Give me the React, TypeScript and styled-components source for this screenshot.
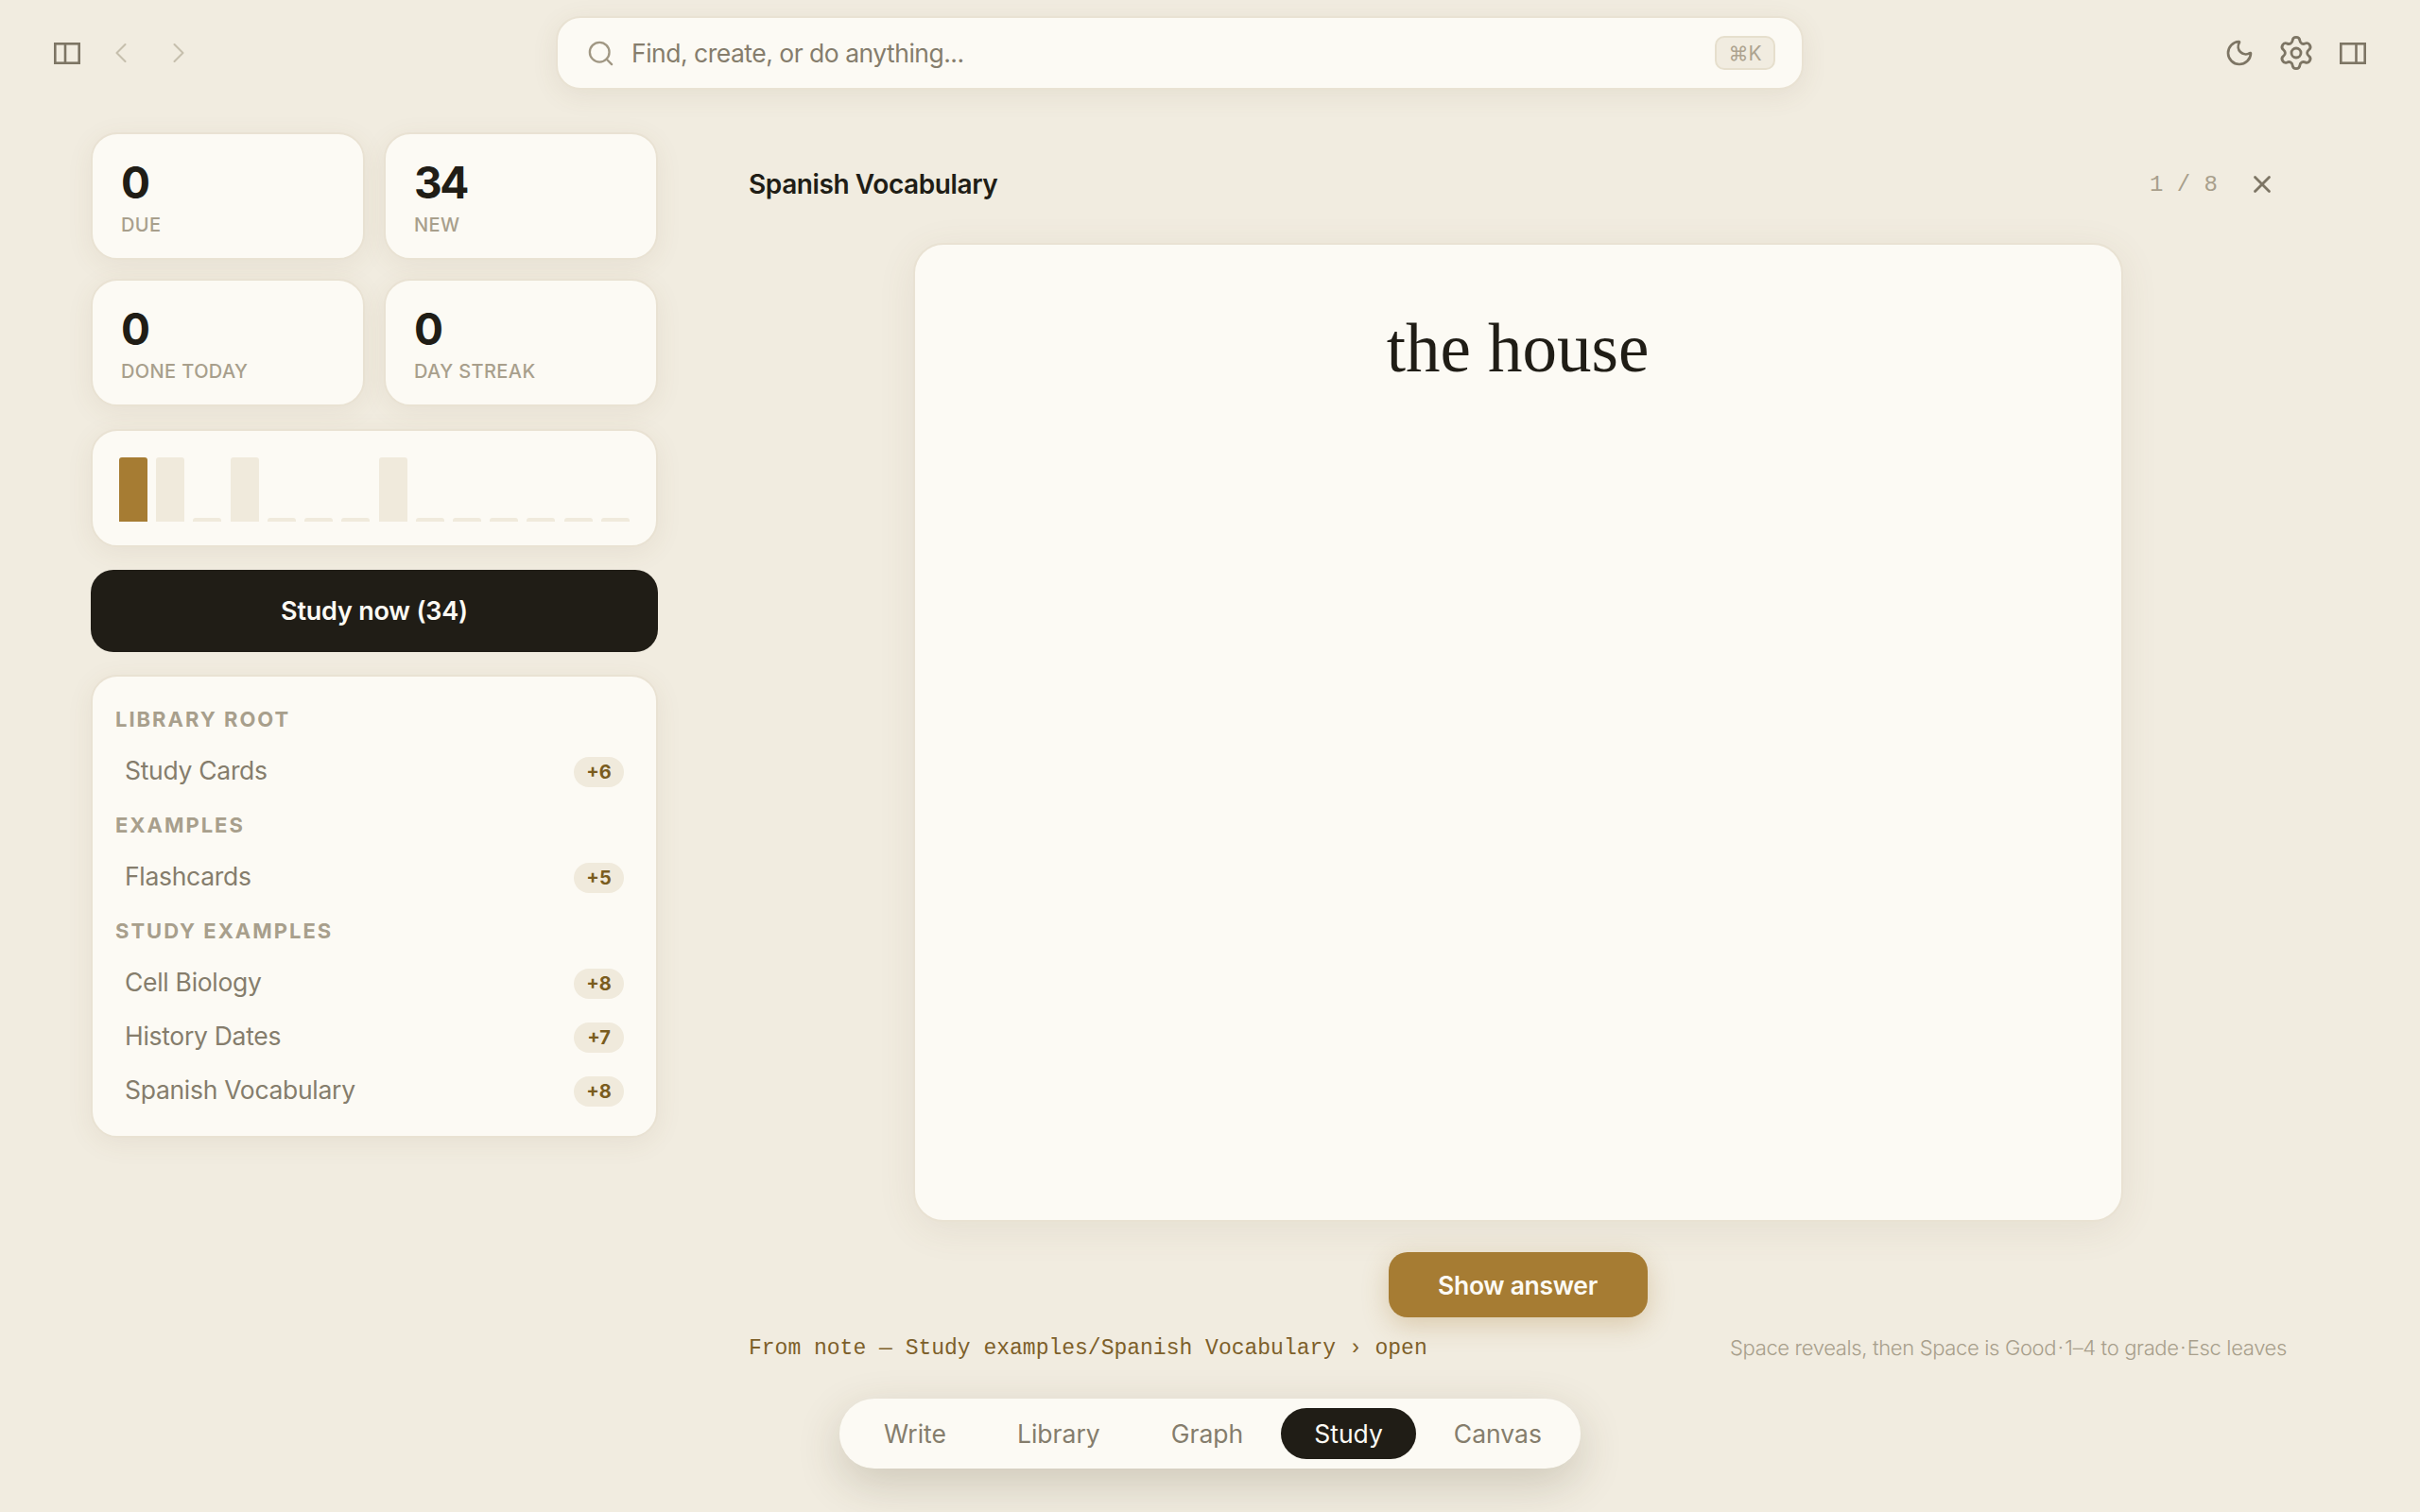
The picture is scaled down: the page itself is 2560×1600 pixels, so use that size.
import React from 'react';
import styled, {createGlobalStyle} from 'styled-components';
import {ChevronLeft, ChevronRight, Moon, Search, Settings, X} from 'lucide-react';

const sans = `Inter, "Noto Sans", sans-serif`;
const mono = `"Liberation Mono", "DejaVu Sans Mono", monospace`;

const Global = createGlobalStyle`
  html, body {
    margin: 0;
    padding: 0;
    background: #f1ece0;
  }
  * {
    box-sizing: border-box;
  }
`

const Page = styled.div`
  width: 2560px;
  height: 1600px;
  display: flex;
  flex-direction: column;
  overflow: hidden;
  background: #f1ece0;
  font-family: ${sans};
  color: #201d16;
`
const TopBar = styled.header`
  height: 112px;
  flex: none;
  display: flex;
  align-items: center;
`
const LeftTools = styled.div`
  flex: 0 0 588px;
  display: flex;
  align-items: center;
  padding-left: 41px;
`
const RightTools = styled.div`
  margin-left: auto;
  display: flex;
  align-items: center;
  gap: 1px;
  padding-right: 42px;
`
const IconButton = styled.div<{$faint?: boolean}>`
  width: 59px;
  height: 59px;
  display: flex;
  align-items: center;
  justify-content: center;
  color: ${p => p.$faint ? '#c6bfad' : '#7d7564'};
`
const BackButton = styled(IconButton)`
  padding-right: 4px;
`
const SearchBox = styled.div`
  width: 1320px;
  height: 78px;
  display: flex;
  align-items: center;
  padding: 0 28px 0 30px;
  background: #fcfaf4;
  border: 2px solid #e9e2d3;
  border-radius: 26px;
  box-shadow: 0 6px 28px rgba(110, 90, 50, .09);
  color: #a09783;
`
const Placeholder = styled.span`
  margin-left: 17px;
  font-size: 26.5px;
  letter-spacing: -.5px;
  color: #857d6c;
`
const Kbd = styled.span`
  margin-left: auto;
  width: 64px;
  height: 36px;
  display: flex;
  align-items: center;
  justify-content: center;
  background: #f1ece0;
  border: 2px solid #e6dfcd;
  border-radius: 10px;
  font-size: 21px;
  color: #ada38f;
`
const Content = styled.div`
  flex: 1;
  display: flex;
  padding: 28px 0 0 96px;
`
const Sidebar = styled.aside`
  width: 600px;
  flex: none;
  display: flex;
  flex-direction: column;
  gap: 24px;
`
const StatGrid = styled.div`
  display: grid;
  grid-template-columns: 290px 290px;
  grid-auto-rows: 135px;
  gap: 20px;
`
const Panel = styled.div`
  background: #fcfaf4;
  border: 2px solid #e9e2d3;
  border-radius: 28px;
  box-shadow: 0 6px 28px rgba(110, 90, 50, .08);
`
const StatCard = styled(Panel)`
  padding: 23px 30px 0;
`
const StatValue = styled.div`
  font-size: 46px;
  line-height: 56px;
  font-weight: 700;
  letter-spacing: -2.5px;
`
const StatLabel = styled.div`
  margin-top: 5px;
  font-size: 20px;
  line-height: 24px;
  font-weight: 500;
  letter-spacing: .02em;
  color: #a89f8c;
`
const ChartCard = styled(Panel)`
  height: 125px;
  padding: 28px 28px 0 28px;
`
const Bars = styled.div`
  height: 68px;
  display: flex;
  align-items: flex-end;
  justify-content: space-between;
`
const Bar = styled.div<{$kind: 'gold' | 'tall' | 'low'}>`
  width: 30px;
  height: ${p => p.$kind === 'low' ? '4px' : '68px'};
  border-radius: 3px 3px 0 0;
  background: ${p => p.$kind === 'gold' ? '#a67c33' : '#f0eadc'};
`
const StudyButton = styled.div`
  height: 87px;
  display: flex;
  align-items: center;
  justify-content: center;
  background: #201d16;
  border-radius: 24px;
  color: #fcfaf4;
  font-size: 27px;
  font-weight: 600;
  letter-spacing: -.2px;
`
const ListCard = styled(Panel)`
  height: 490px;
  padding: 17px 34px 0 24px;
`
const GroupTitle = styled.div`
  height: 55px;
  display: flex;
  align-items: center;
  font-size: 22px;
  font-weight: 700;
  letter-spacing: .09em;
  color: #a89f8c;
`
const DeckRow = styled.div`
  height: 57px;
  display: flex;
  align-items: center;
  justify-content: space-between;
  padding-left: 10px;
`
const DeckName = styled.span`
  padding-bottom: 3px;
  font-size: 26.5px;
  letter-spacing: -.3px;
  color: #857d6c;
`
const Badge = styled.span`
  width: 53px;
  height: 32px;
  display: flex;
  align-items: center;
  justify-content: center;
  background: #f0eadc;
  border-radius: 16px;
  font-size: 20px;
  font-weight: 700;
  color: #7a5c1e;
`
const Main = styled.main`
  width: 1627px;
  flex: none;
  margin-left: 96px;
  padding-top: 28px;
  display: flex;
  flex-direction: column;
  align-items: center;
`
const MainHeader = styled.div`
  width: 100%;
  height: 54px;
  flex: none;
  display: flex;
  align-items: center;
  padding-right: 11px;
`
const DeckTitle = styled.h1`
  margin: 0;
  font-size: 28px;
  font-weight: 600;
  letter-spacing: -.4px;
`
const Progress = styled.span`
  margin-left: auto;
  font-family: ${mono};
  font-size: 24px;
  color: #a89f8c;
`
const CloseIcon = styled.div`
  margin-left: 32px;
  display: flex;
  color: #7d7564;
`
const FlashCard = styled(Panel)`
  width: 1280px;
  height: 1036px;
  flex: none;
  margin-top: 35px;
  padding-top: 68px;
  border-radius: 32px;
  text-align: center;
  font-family: "Liberation Serif", serif;
  font-size: 73px;
  line-height: 84px;
  box-shadow: 0 8px 40px rgba(110, 90, 50, .09);
`
const ShowAnswer = styled.div`
  width: 274px;
  height: 69px;
  flex: none;
  margin-top: 32px;
  display: flex;
  align-items: center;
  justify-content: center;
  background: #a67c33;
  border-radius: 20px;
  color: #fcfaf4;
  font-size: 26.5px;
  font-weight: 600;
  letter-spacing: -.3px;
  box-shadow: 0 8px 28px rgba(166, 124, 51, .3);
`
const FootRow = styled.div`
  width: 100%;
  height: 36px;
  flex: none;
  margin-top: 15px;
  display: flex;
  align-items: center;
  justify-content: space-between;
`
const SourceLine = styled.span`
  font-family: ${mono};
  font-size: 23px;
  color: #7d5f2a;
`
const Hint = styled.span`
  padding-bottom: 2px;
  font-size: 22px;
  font-weight: 300;
  letter-spacing: -.35px;
  color: #a89f8c;
`
const DockRow = styled.div`
  flex: none;
  display: flex;
  justify-content: center;
  padding-bottom: 46px;
`
const Dock = styled.nav`
  height: 74px;
  display: flex;
  align-items: center;
  gap: 5px;
  padding: 0 6px 0 12px;
  background: #fcfaf4;
  border-radius: 37px;
  box-shadow: 0 16px 48px rgba(70, 60, 30, .2);
`
const DockItem = styled.div<{$active?: boolean}>`
  height: 54px;
  display: flex;
  align-items: center;
  padding: 0 35px;
  border-radius: 27px;
  font-size: 26.5px;
  background: ${p => p.$active ? '#201d16' : 'transparent'};
  color: ${p => p.$active ? '#fcfaf4' : '#857d6c'};
`

const PanelIcon: React.FC<{side: 'left' | 'right'}> = ({side}) => {
    const x = side === 'left' ? 12 : 17.5
    return (
        <svg width="28" height="23" viewBox="0 0 28 23" fill="none" stroke="currentColor" strokeWidth="2.6">
            <rect x="1.3" y="1.3" width="25.4" height="20.4"/>
            <line x1={x} y1="1" x2={x} y2="22"/>
        </svg>
    )
}

const stats = [
    {value: '0', label: 'DUE'},
    {value: '34', label: 'NEW'},
    {value: '0', label: 'DONE TODAY'},
    {value: '0', label: 'DAY STREAK'},
]
const bars: ('gold' | 'tall' | 'low')[] = [
    'gold', 'tall', 'low', 'tall', 'low', 'low', 'low', 'tall', 'low', 'low', 'low', 'low', 'low', 'low',
]
const groups = [
    {title: 'LIBRARY ROOT', decks: [{name: 'Study Cards', count: '+6'}]},
    {title: 'EXAMPLES', decks: [{name: 'Flashcards', count: '+5'}]},
    {
        title: 'STUDY EXAMPLES',
        decks: [
            {name: 'Cell Biology', count: '+8'},
            {name: 'History Dates', count: '+7'},
            {name: 'Spanish Vocabulary', count: '+8'},
        ],
    },
]
const tabs = ['Write', 'Library', 'Graph', 'Study', 'Canvas']

const App: React.FC = () => {
    return (
        <Page>
            <Global/>
            <TopBar>
                <LeftTools>
                    <IconButton><PanelIcon side="left"/></IconButton>
                    <BackButton $faint><ChevronLeft size={36} strokeWidth={1.4}/></BackButton>
                    <IconButton $faint><ChevronRight size={36} strokeWidth={1.4}/></IconButton>
                </LeftTools>
                <SearchBox>
                    <Search size={31} strokeWidth={1.8}/>
                    <Placeholder>Find, create, or do anything...</Placeholder>
                    <Kbd>⌘K</Kbd>
                </SearchBox>
                <RightTools>
                    <IconButton><Moon size={32} strokeWidth={2}/></IconButton>
                    <IconButton><Settings size={40} strokeWidth={1.7}/></IconButton>
                    <IconButton><PanelIcon side="right"/></IconButton>
                </RightTools>
            </TopBar>
            <Content>
                <Sidebar>
                    <StatGrid>
                        {stats.map(s => (
                            <StatCard key={s.label}>
                                <StatValue>{s.value}</StatValue>
                                <StatLabel>{s.label}</StatLabel>
                            </StatCard>
                        ))}
                    </StatGrid>
                    <ChartCard>
                        <Bars>
                            {bars.map((kind, i) => <Bar key={i} $kind={kind}/>)}
                        </Bars>
                    </ChartCard>
                    <StudyButton>Study now (34)</StudyButton>
                    <ListCard>
                        {groups.map(g => (
                            <React.Fragment key={g.title}>
                                <GroupTitle>{g.title}</GroupTitle>
                                {g.decks.map(d => (
                                    <DeckRow key={d.name}>
                                        <DeckName>{d.name}</DeckName>
                                        <Badge>{d.count}</Badge>
                                    </DeckRow>
                                ))}
                            </React.Fragment>
                        ))}
                    </ListCard>
                </Sidebar>
                <Main>
                    <MainHeader>
                        <DeckTitle>Spanish Vocabulary</DeckTitle>
                        <Progress>1 / 8</Progress>
                        <CloseIcon><X size={30} strokeWidth={2.2}/></CloseIcon>
                    </MainHeader>
                    <FlashCard>the house</FlashCard>
                    <ShowAnswer>Show answer</ShowAnswer>
                    <FootRow>
                        <SourceLine>From note — Study examples/Spanish Vocabulary › open</SourceLine>
                        <Hint>{'Space reveals, then Space is Good\u200a·\u200a1–4 to grade\u200a·\u200aEsc leaves'}</Hint>
                    </FootRow>
                </Main>
            </Content>
            <DockRow>
                <Dock>
                    {tabs.map(t => <DockItem key={t} $active={t === 'Study'}>{t}</DockItem>)}
                </Dock>
            </DockRow>
        </Page>
    )
}
export default App;
